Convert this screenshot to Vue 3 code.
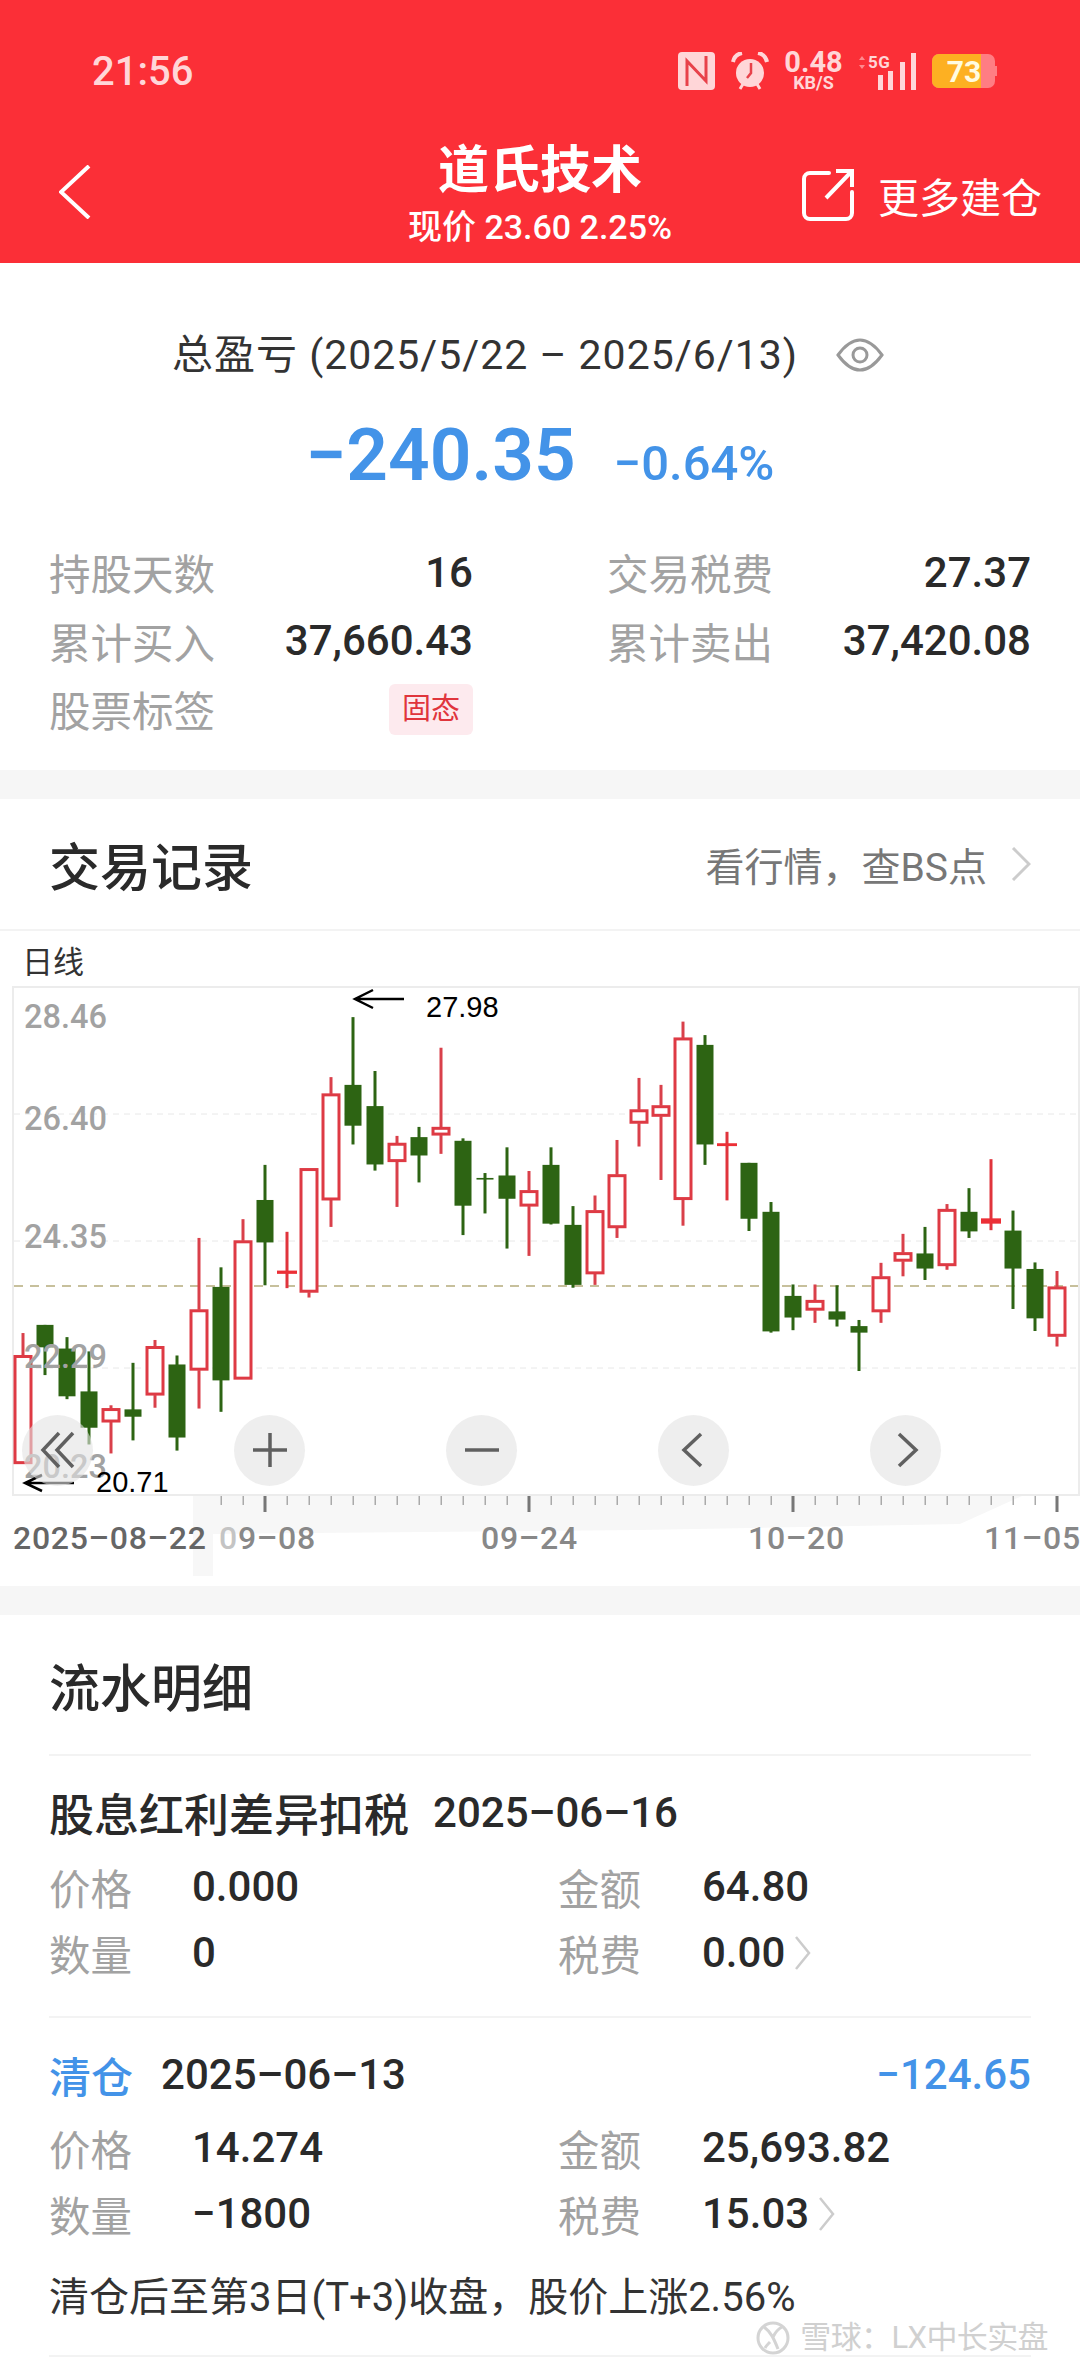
<template>
  <div class="page">
    <header class="top">
      <div class="status">
        <span class="time">21:56</span>
        <div class="status-icons">
          <svg width="37" height="38" viewBox="0 0 37 38">
            <rect x="0" y="0" width="37" height="38" rx="4" fill="#ffd6d8" />
            <path d="M9 34V9l19 20V4" fill="none" stroke="#e8414a" stroke-width="3" />
          </svg>
          <svg width="38" height="38" viewBox="0 0 38 38">
            <circle cx="19" cy="21" r="14" fill="#ffd6d8" />
            <path d="M2 10C3 5 6 2 11 1M36 10C35 5 32 2 27 1" fill="none" stroke="#ffd6d8" stroke-width="4" />
            <path d="M9 37l3-5M29 37l-3-5" stroke="#ffd6d8" stroke-width="3" />
            <path d="M20 11v10l-4 5" fill="none" stroke="#e8414a" stroke-width="2.5" />
          </svg>
          <div class="speed">
            <span class="speed-num">0.48</span>
            <span class="speed-unit">KB/S</span>
          </div>
          <svg width="58" height="38" viewBox="0 0 58 38">
            <path d="M1 8l3-4 3 4zM1 13l3 4 3-4z" fill="#ff8a8e" />
            <text x="10" y="16" class="net">5G</text>
            <rect x="20" y="23" width="5" height="15" fill="#ffd6d8" />
            <rect x="30" y="19" width="5" height="19" fill="#ffd6d8" />
            <rect x="42" y="10" width="5" height="28" fill="#ffd6d8" />
            <rect x="53" y="1" width="5" height="37" fill="#ffd6d8" />
          </svg>
          <svg width="65" height="34" viewBox="0 0 65 34">
            <rect x="0" y="0" width="63" height="34" rx="7" fill="#ff7d83" />
            <rect x="63" y="12" width="2" height="10" fill="#ff7d83" />
            <path d="M7 0H49V34H7A7 7 0 0 1 0 27V7A7 7 0 0 1 7 0Z" fill="#fdb022" />
            <text x="32" y="28" text-anchor="middle" class="batt">73</text>
          </svg>
        </div>
      </div>
      <div class="nav">
        <svg class="back" width="32" height="54" viewBox="0 0 32 54">
          <path d="M30 1L2 27l28 26" fill="none" stroke="#fff" stroke-width="4" />
        </svg>
        <div class="nav-title">
          <div class="name">道氏技术</div>
          <div class="quote">现价 23.60 2.25%</div>
        </div>
        <div class="more">
          <svg width="54" height="54" viewBox="0 0 54 54">
            <path d="M28 5H9a6 6 0 0 0-6 6v34a6 6 0 0 0 6 6h36a6 6 0 0 0 6-6V24" fill="none" stroke="#fff" stroke-width="4" stroke-linecap="round" />
            <path d="M25 30L50 4M35 3h16v16" fill="none" stroke="#fff" stroke-width="4" />
          </svg>
          <span>更多建仓</span>
        </div>
      </div>
    </header>

    <section class="summary">
      <div class="range">
        <span>总盈亏 (2025/5/22 – 2025/6/13)</span>
        <svg width="48" height="34" viewBox="0 0 48 34">
          <path d="M2 17C10 6 17 2 24 2s14 4 22 15c-8 11-15 15-22 15S10 28 2 17Z" fill="none" stroke="#999" stroke-width="3" />
          <circle cx="24" cy="17" r="7" fill="none" stroke="#999" stroke-width="3" />
        </svg>
      </div>
      <div class="profit">
        <span class="profit-num">−240.35</span>
        <span class="profit-pct">−0.64%</span>
      </div>
      <div class="stats">
        <div v-for="s in stats" :key="s.label" class="stat">
          <span class="lbl">{{ s.label }}</span>
          <span v-if="s.tag" class="tag">{{ s.value }}</span>
          <span v-else class="val">{{ s.value }}</span>
        </div>
      </div>
    </section>

    <div class="band"></div>

    <section class="records-head">
      <h2>交易记录</h2>
      <div class="link">
        <span>看行情，查BS点</span>
        <svg width="20" height="34" viewBox="0 0 20 34">
          <path d="M2 1l16 16L2 33" fill="none" stroke="#ccc" stroke-width="3" />
        </svg>
      </div>
    </section>

    <div class="period">日线</div>
    <div class="plot">
      <svg class="plot-svg" width="1080" height="600" viewBox="0 0 1080 600">
        <path d="M193 510H1022L960 538 640 544 213 548V590H193Z" fill="#f7f7f7" />
        <rect x="13" y="1" width="1066" height="508" fill="#fff" stroke="#ececec" stroke-width="2" />
        <line v-for="y in [128, 255, 382]" :key="y" x1="14" x2="1078" :y1="y" :y2="y" stroke="#e8e8e8" stroke-width="1" stroke-dasharray="6 5" />
        <line x1="14" x2="1078" y1="300" y2="300" stroke="#b5ac7c" stroke-width="1.5" stroke-dasharray="9 7" />
        <g v-for="c in candles" :key="c.x">
          <template v-if="c.kind === 's'">
            <rect :x="c.x - 1.5" :y="c.high" width="3" :height="c.low - c.high" fill="#e0343c" />
            <rect :x="c.x - 10" :y="c.top" width="20" :height="c.bottom - c.top" fill="#ec2f36" />
          </template>
          <template v-else-if="c.kind === 'g'">
            <rect :x="c.x - 1.5" :y="c.high" width="3" :height="c.low - c.high" fill="#2d6413" />
            <rect :x="c.x - 8.5" :y="c.top" width="17" :height="c.bottom - c.top" fill="#2d6413" />
          </template>
          <template v-else>
            <rect :x="c.x - 1.5" :y="c.high" width="3" :height="c.top - c.high" fill="#d9404a" />
            <rect :x="c.x - 1.5" :y="c.bottom" width="3" :height="c.low - c.bottom" fill="#d9404a" />
            <rect :x="c.x - 8" :y="c.top + 1" width="16" :height="c.bottom - c.top - 2" fill="#fff" stroke="#de3a44" stroke-width="3" />
          </template>
        </g>
        <text v-for="l in priceLabels" :key="l.text" x="24" :y="l.y" class="price">{{ l.text }}</text>
        <path d="M404 13H355M373 4L355 13l18 9" fill="none" stroke="#000" stroke-width="2.5" />
        <text x="426" y="31" class="mark">27.98</text>
        <path d="M74 497H25M42 489L25 497l17 8" fill="none" stroke="#000" stroke-width="2.5" />
        <text x="96" y="506" class="mark">20.71</text>
        <rect v-for="t in ticks" :key="t.x" :x="t.x - (t.major ? 1.5 : 0.5)" y="510" :width="t.major ? 3 : 1.5" :height="t.major ? 16 : 9" :fill="t.major ? '#777' : '#aaa'" />
        <text x="13" y="563" class="axis first">2025–08–22</text>
        <text x="219" y="563" class="axis"><tspan fill="#c4c4c4">0</tspan>9–08</text>
        <text x="481" y="563" class="axis">09–24</text>
        <text x="748" y="563" class="axis">10–20</text>
        <text x="984" y="563" class="axis">11–05</text>
      </svg>
      <div class="controls">
        <button v-for="b in controls" :key="b" class="ctrl">
          <svg width="40" height="40" viewBox="0 0 40 40">
            <path :d="b" fill="none" stroke="#606060" stroke-width="3.5" />
          </svg>
        </button>
      </div>
    </div>

    <div class="band"></div>

    <section class="flow">
      <h2 class="flow-title">流水明细</h2>
      <div class="rec rec-a">
        <div class="rec-head">
          <span class="rec-name">股息红利差异扣税</span>
          <span class="rec-date">2025–06–16</span>
        </div>
        <div class="rec-grid">
          <span class="lbl">价格</span><span class="val">0.000</span>
          <span class="lbl">金额</span><span class="val">64.80</span>
          <span class="lbl">数量</span><span class="val">0</span>
          <span class="lbl">税费</span>
          <span class="val with-arrow">0.00
            <svg width="18" height="34" viewBox="0 0 18 34"><path d="M2 1l13 16L2 33" fill="none" stroke="#ccc" stroke-width="2.5" /></svg>
          </span>
        </div>
      </div>
      <div class="rec rec-b">
        <div class="rec-head">
          <span class="rec-name blue">清仓</span>
          <span class="rec-date">2025–06–13</span>
          <span class="rec-pl">−124.65</span>
        </div>
        <div class="rec-grid">
          <span class="lbl">价格</span><span class="val">14.274</span>
          <span class="lbl">金额</span><span class="val">25,693.82</span>
          <span class="lbl">数量</span><span class="val">−1800</span>
          <span class="lbl">税费</span>
          <span class="val with-arrow">15.03
            <svg width="18" height="34" viewBox="0 0 18 34"><path d="M2 1l13 16L2 33" fill="none" stroke="#ccc" stroke-width="2.5" /></svg>
          </span>
        </div>
        <p class="note">清仓后至第3日(T+3)收盘，股价上涨2.56%</p>
      </div>
    </section>

    <div class="watermark">
      <svg width="36" height="36" viewBox="0 0 36 36">
        <circle cx="18" cy="18" r="15" fill="none" stroke="#d4d4d4" stroke-width="3" />
        <path d="M9 7c7 5 10 12 14 22M27 7c-4 2-7 6-9 10M10 28c1-2 3-4 5-6" fill="none" stroke="#d4d4d4" stroke-width="3" />
      </svg>
      <span>雪球：LX中长实盘</span>
    </div>
  </div>
</template>

<script setup>
const stats = [
  { label: '持股天数', value: '16' },
  { label: '交易税费', value: '27.37' },
  { label: '累计买入', value: '37,660.43' },
  { label: '累计卖出', value: '37,420.08' },
  { label: '股票标签', value: '固态', tag: true },
]

const priceLabels = [
  { text: '28.46', y: 42 },
  { text: '26.40', y: 144 },
  { text: '24.35', y: 262 },
  { text: '22.29', y: 382 },
  { text: '20.23', y: 492 },
]

// high, body top, body bottom, low as read off a 2.45x crop of the chart
const raw = [
  [985, 1040, 1305, 1305, 'r'], [965, 965, 1020, 1088, 'g'], [995, 1023, 1140, 1147, 'g'], [1030, 1128, 1217, 1258, 'g'],
  [1162, 1170, 1203, 1280, 'r'], [1058, 1172, 1190, 1248, 'g'], [1002, 1018, 1137, 1168, 'r'], [1040, 1062, 1241, 1273, 'g'],
  [752, 928, 1076, 1170, 'r'], [824, 872, 1101, 1178, 'g'], [706, 759, 1098, 1098, 'r'], [573, 659, 763, 868, 'g'],
  [737, 832, 840, 875, 's'], [582, 582, 885, 898, 'r'], [358, 399, 659, 725, 'r'], [211, 377, 477, 523, 'g'],
  [343, 429, 572, 587, 'g'], [502, 520, 565, 676, 'r'], [480, 505, 550, 616, 'g'], [286, 481, 500, 546, 'r'],
  [508, 514, 673, 745, 'g'], [593, 605, 609, 692, 'g'], [530, 599, 656, 778, 'g'], [588, 636, 674, 796, 'r'],
  [530, 573, 717, 719, 'g'], [674, 720, 867, 874, 'g'], [648, 685, 840, 867, 'r'], [512, 597, 727, 752, 'r'],
  [360, 438, 471, 528, 'r'], [377, 428, 454, 610, 'r'], [222, 262, 658, 722, 'r'], [255, 279, 523, 573, 'g'],
  [492, 520, 527, 660, 's'], [568, 568, 705, 735, 'g'], [664, 688, 981, 984, 'g'], [866, 894, 947, 978, 'g'],
  [866, 905, 929, 960, 'r'], [868, 932, 952, 969, 'g'], [953, 968, 984, 1078, 'g'], [813, 847, 933, 960, 'r'],
  [742, 788, 809, 846, 'r'], [725, 790, 827, 855, 'g'], [669, 682, 820, 830, 'r'], [630, 688, 736, 752, 'g'],
  [559, 704, 717, 733, 's'], [685, 734, 827, 926, 'g'], [812, 828, 949, 980, 'g'], [833, 872, 993, 1018, 'r'],
]

const toY = (v) => v / 2.45 - 55

const candles = raw.map((r, i) => ({
  x: 23 + 22 * i,
  high: toY(r[0]),
  top: toY(r[1]),
  bottom: toY(r[2]),
  low: toY(r[3]),
  kind: r[4],
}))

const majors = [11, 23, 35, 47]
const ticks = candles.slice(9).map((c, i) => ({ x: c.x, major: majors.includes(i + 9) }))

const controls = [
  'M21 3L5 20l16 17M35 3L19 20l16 17',
  'M3 20h34M20 3v34',
  'M3 20h34',
  'M27 4L10 20l17 16',
  'M13 4l17 16-17 16',
]
</script>

<style>
html, body {
  background: #fff;
}
</style>

<style scoped>
.page {
  position: relative;
  width: 1080px;
  height: 2373px;
  overflow: hidden;
  background: #fff;
  color: #333;
  font-family: Roboto, "Noto Sans CJK SC", sans-serif;
}

.top {
  height: 263px;
  background: #fb2f37;
  color: #fff;
}

.status {
  display: flex;
  align-items: center;
  height: 142px;
  padding: 0 83px 0 92px;
}

.time {
  font-size: 40px;
  font-weight: 500;
  color: #ffd6d8;
}

.status-icons {
  display: flex;
  align-items: center;
  gap: 16px;
  margin-left: auto;
}

.speed {
  display: flex;
  flex-direction: column;
  align-items: center;
  width: 57px;
  color: #ffd6d8;
}

.speed-num {
  font-size: 29px;
  font-weight: 700;
  line-height: 23px;
}

.speed-unit {
  font-size: 18px;
  font-weight: 700;
  line-height: 17px;
}

.net {
  font-size: 17px;
  font-weight: 700;
  letter-spacing: 0.5px;
  fill: #ffd6d8;
}

.batt {
  font-size: 30px;
  font-weight: 700;
  fill: #fffbe0;
}

.nav {
  position: relative;
  display: flex;
  justify-content: center;
  height: 121px;
}

.back {
  position: absolute;
  left: 59px;
  top: 23px;
}

.nav-title {
  text-align: center;
}

.name {
  margin-top: 1px;
  font-size: 51px;
  font-weight: 700;
  line-height: 56px;
}

.quote {
  margin-top: 8px;
  font-size: 34px;
  font-weight: 500;
  line-height: 40px;
}

.more {
  position: absolute;
  left: 801px;
  top: 23px;
  display: flex;
  align-items: center;
  gap: 23px;
  font-size: 41px;
}

.summary {
  padding: 66px 49px 26px 49px;
}

.range {
  display: flex;
  justify-content: center;
  align-items: center;
  gap: 38px;
  padding-right: 24px;
  font-size: 41px;
  letter-spacing: 1px;
  line-height: 52px;
}

.profit {
  display: flex;
  justify-content: center;
  align-items: baseline;
  gap: 38px;
  height: 80px;
  margin-top: 34px;
  line-height: 80px;
  color: #4393e8;
}

.profit-num {
  font-size: 73px;
  font-weight: 600;
}

.profit-pct {
  font-size: 49px;
  font-weight: 500;
}

.stats {
  display: grid;
  grid-template-columns: 424px 424px;
  column-gap: 134px;
  margin-top: 43px;
}

.stat {
  display: flex;
  justify-content: space-between;
  align-items: center;
  height: 68.5px;
}

.lbl {
  font-size: 41.5px;
  color: #a2a2a2;
}

.val {
  font-size: 42px;
  font-weight: 500;
  color: #2a2a2a;
}

.tag {
  padding: 5px 13px;
  border-radius: 6px;
  background: #fdeaee;
  font-size: 29px;
  line-height: 41px;
  color: #e0353c;
}

.band {
  height: 29px;
  background: #f6f6f6;
}

.records-head {
  display: flex;
  justify-content: space-between;
  align-items: center;
  height: 132px;
  padding: 0 49px 0 49px;
  box-sizing: border-box;
  border-bottom: 2px solid #f3f3f3;
}

h2 {
  margin: 0;
  font-size: 51px;
  font-weight: 500;
  color: #2a2a2a;
}

.link {
  display: flex;
  align-items: center;
  gap: 24px;
  font-size: 39px;
  color: #777;
}

.period {
  padding: 8px 0 0 22px;
  font-size: 31px;
  line-height: 47px;
  color: #333;
}

.plot {
  position: relative;
  height: 600px;
}

.plot-svg {
  display: block;
}

.price {
  font-size: 32.5px;
  font-weight: 500;
  fill: #a2a2a2;
}

.mark {
  font-family: "Liberation Sans", sans-serif;
  font-size: 29px;
  fill: #000;
}

.axis {
  font-size: 32px;
  font-weight: 500;
  letter-spacing: 0.7px;
  fill: #888;
}

.axis.first {
  fill: #666;
}

.controls {
  position: absolute;
  left: 22px;
  top: 429px;
  display: flex;
  gap: 141px;
}

.ctrl {
  display: flex;
  justify-content: center;
  align-items: center;
  width: 71px;
  height: 71px;
  padding: 0;
  border: none;
  border-radius: 50%;
  background: rgba(226, 226, 226, 0.6);
}

.flow {
  padding: 0 49px 0 49px;
}

.flow-title {
  height: 141px;
  padding-top: 45px;
  box-sizing: border-box;
  border-bottom: 2px solid #f3f3f3;
  line-height: 60px;
}

.rec {
  padding-top: 27px;
  border-bottom: 2px solid #f3f3f3;
}

.rec-a {
  padding-top: 27px;
  padding-bottom: 30px;
}

.rec-a .rec-grid {
  margin-top: 11px;
}

.rec-head {
  display: flex;
  align-items: center;
  height: 60px;
}

.rec-name {
  font-size: 45px;
  font-weight: 500;
  color: #2a2a2a;
}

.rec-name.blue {
  font-size: 42px;
  color: #4393e8;
}

.rec-date {
  margin-left: 24px;
  font-size: 42px;
  font-weight: 500;
  color: #2a2a2a;
}

.rec-b .rec-date {
  margin-left: 28px;
}

.rec-pl {
  margin-left: auto;
  font-size: 42px;
  font-weight: 500;
  color: #4393e8;
}

.rec-grid {
  display: grid;
  grid-template-columns: 143px 366px 144px 1fr;
  grid-auto-rows: 66px;
  align-items: center;
  margin-top: 10px;
}

.with-arrow {
  display: flex;
  align-items: center;
  gap: 9px;
}

.note {
  margin: 21px 0 0;
  padding-bottom: 27px;
  font-size: 40px;
  line-height: 60px;
  color: #333;
}

.watermark {
  position: absolute;
  right: 32px;
  top: 2320px;
  display: flex;
  align-items: center;
  gap: 9px;
  font-size: 31px;
  letter-spacing: -0.6px;
  line-height: 36px;
  color: #d0d0d0;
  text-shadow: 0 0 3px #fff;
}
</style>
